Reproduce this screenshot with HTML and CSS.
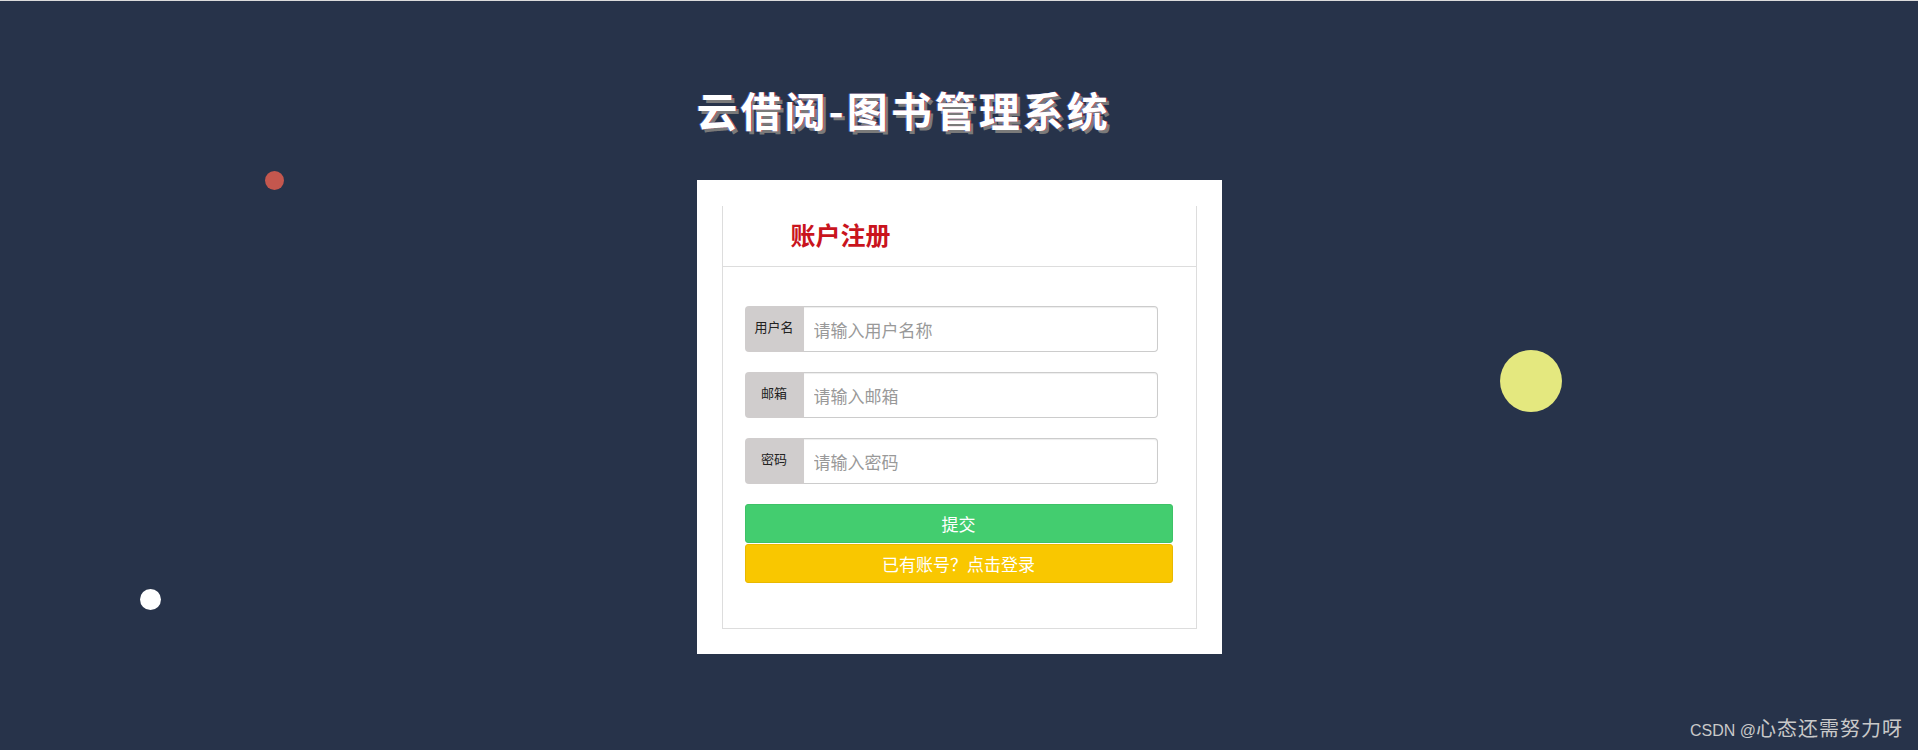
FILE: index.html
```html
<!DOCTYPE html>
<html lang="zh">
<head>
<meta charset="utf-8">
<title>云借阅-图书管理系统</title>
<link rel="stylesheet" href="styles.css">
</head>
<body>
<div class="dot dot-red"></div>
<div class="dot dot-white"></div>
<div class="dot dot-yellow"></div>

<main class="wrap">
  <h1 class="site-title">云借阅-图书管理系统</h1>
  <section class="card">
    <div class="panel">
      <div class="panel-head">
        <h3 class="panel-title">账户注册</h3>
      </div>
      <form class="panel-body">
        <div class="field">
          <span class="addon">用户名</span>
          <input class="control" type="text" placeholder="请输入用户名称">
        </div>
        <div class="field">
          <span class="addon">邮箱</span>
          <input class="control" type="text" placeholder="请输入邮箱">
        </div>
        <div class="field">
          <span class="addon">密码</span>
          <input class="control" type="password" placeholder="请输入密码">
        </div>
        <div class="actions">
          <button type="button" class="btn btn-green">提交</button>
          <button type="button" class="btn btn-yellow">已有账号？点击登录</button>
        </div>
      </form>
    </div>
  </section>
</main>

<div class="watermark"><span class="wm-latin">CSDN @</span><span class="wm-cjk">心态还需努力呀</span></div>
</body>
</html>
```

FILE: styles.css
```css
* { box-sizing: border-box; }

html, body {
  margin: 0;
  padding: 0;
}

body {
  min-height: 750px;
  background: #27334a;
  border-top: 1px solid #dcdcdc;
  font-family: "Noto Sans CJK SC", "Noto Sans", "Liberation Sans", sans-serif;
  position: relative;
  overflow: hidden;
}

.wrap {
  width: 525px;
  margin: 0 auto;
  padding-top: 84px;
}

.site-title {
  margin: 0 0 47px;
  font-size: 41px;
  line-height: 48px;
  font-weight: 700;
  letter-spacing: 3px;
  color: #ffffff;
  text-shadow: 1px 0 0 rgba(220, 40, 60, 0.6), -1px 0 0 rgba(80, 120, 255, 0.5), 3px 3px 0 #7a7a7a;
  white-space: nowrap;
}

.card {
  background: #ffffff;
  padding: 26px 25px 25px;
  height: 474px;
}

.panel {
  border: 1px solid #dddddd;
  border-top: none;
  height: 423px;
}

.panel-head {
  height: 61px;
  border-bottom: 1px solid #dddddd;
  padding-left: 68px;
}

.panel-title {
  margin: 0;
  line-height: 57px;
  font-size: 25px;
  font-weight: 700;
  color: #c9141d;
}

.panel-body {
  padding: 39px 0 0 22px;
}

.field {
  display: flex;
  width: 413px;
  height: 46px;
  margin-bottom: 20px;
}

.addon {
  flex: 0 0 59px;
  display: flex;
  align-items: center;
  justify-content: center;
  padding-bottom: 6px;
  background: #d0cdcd;
  border-radius: 4px 0 0 4px;
  font-size: 13px;
  color: #222;
}

.control {
  flex: 1;
  min-width: 0;
  height: 46px;
  border: 1px solid #cccccc;
  border-left: none;
  border-radius: 0 4px 4px 0;
  padding: 0 10px;
  font-family: inherit;
  font-size: 17px;
  color: #555;
  box-shadow: inset 0 1px 1px rgba(0, 0, 0, 0.075);
  outline: none;
}

.control::placeholder {
  color: #999999;
}

.actions {
  display: flex;
  flex-direction: column;
  width: 428px;
}

.btn {
  height: 39px;
  border-radius: 3px;
  font-family: inherit;
  font-size: 17px;
  color: #ffffff;
  padding: 0;
  cursor: pointer;
}

.btn-green {
  background: #43cd6f;
  border: 1px solid #3ec267;
}

.btn-yellow {
  margin-top: 1px;
  background: #f9c700;
  border: 1px solid #e9b800;
}

.dot {
  position: absolute;
  border-radius: 50%;
}

.dot-red {
  left: 265px;
  top: 170px;
  width: 19px;
  height: 19px;
  background: #c4574e;
}

.dot-white {
  left: 140px;
  top: 588px;
  width: 21px;
  height: 21px;
  background: #ffffff;
}

.dot-yellow {
  left: 1500px;
  top: 349px;
  width: 62px;
  height: 62px;
  background: #e4e87f;
}

.watermark {
  position: absolute;
  right: 15px;
  bottom: 9px;
  line-height: 20px;
  color: #c9c9c9;
  white-space: nowrap;
}

.wm-latin {
  font-family: "Liberation Sans", sans-serif;
  font-size: 16px;
}

.wm-cjk {
  font-family: "Noto Sans CJK SC", sans-serif;
  font-size: 20px;
  letter-spacing: 1px;
}
```
